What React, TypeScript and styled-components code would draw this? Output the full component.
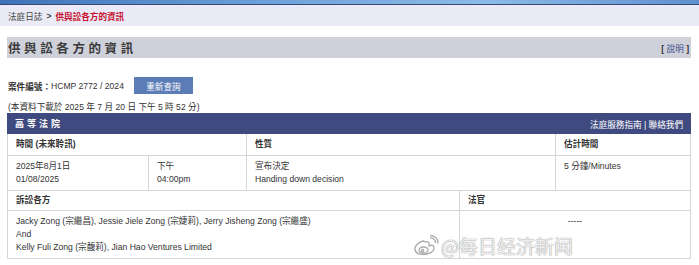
import styled, { createGlobalStyle } from 'styled-components';

const GlobalStyle = createGlobalStyle`
  html, body {
    margin: 0;
    padding: 0;
    background: #fff;
  }
  body {
    font-family: "Liberation Sans", "Noto Sans CJK TC", sans-serif;
    font-size: 8.6px;
    color: #333;
  }
`;

const Page = styled.div`
  position: relative;
  width: 699px;
  height: 265px;
  overflow: hidden;
`;

const TopBar = styled.div`
  height: 4px;
  background: linear-gradient(90deg, #3f73b8 0%, #6fa3da 40%, #8cbbe6 70%, #5e90cf 100%);
  border-bottom: 1px solid #3a4678;
`;

const Breadcrumb = styled.div`
  height: 21px;
  display: flex;
  align-items: center;
  padding-left: 8px;
  background: #eaebf6;
  font-size: 8.6px;
  color: #444;
`;

const Arrow = styled.span`
  font-weight: bold;
  margin: 0 4px;
`;

const Current = styled.span`
  color: #c8102e;
  font-weight: bold;
`;

const Content = styled.div`
  padding: 11px 8px 0 7px;
`;

const TitleBar = styled.div`
  height: 21px;
  display: flex;
  align-items: center;
  justify-content: space-between;
  padding: 0 2px 0 1px;
  background: #cfd1da;
`;

const Title = styled.h1`
  margin: 0;
  font-size: 12.5px;
  font-weight: bold;
  letter-spacing: 3.6px;
  color: #3a3a3a;
`;

const Help = styled.span`
  font-size: 8.6px;
  color: #3c4d8c;
  b {
    color: #333;
  }
`;

const CaseRow = styled.div`
  margin-top: 19px;
  height: 17px;
  display: flex;
  align-items: center;
  padding-left: 1px;
`;

const Label = styled.b`
  font-weight: bold;
`;

const RefreshButton = styled.button`
  margin-left: 10px;
  width: 59px;
  height: 17px;
  border: none;
  padding: 0;
  background: #5b7cb6;
  color: #fff;
  font-family: inherit;
  font-size: 8.6px;
`;

const Downloaded = styled.div`
  margin-top: 7px;
  height: 12px;
  line-height: 12px;
  padding-left: 1px;
`;

const Table = styled.div`
  border-left: 1px solid #d6d6d6;
  border-right: 1px solid #d6d6d6;
`;

const CourtBar = styled.div`
  height: 21px;
  display: flex;
  align-items: center;
  justify-content: space-between;
  padding: 0 8px 0 8px;
  margin-left: -1px;
  margin-right: -1px;
  background: #3f4b80;
  color: #fff;
`;

const CourtName = styled.span`
  font-weight: bold;
  font-size: 9px;
  letter-spacing: 3px;
`;

const Row = styled.div<{ cols: string }>`
  display: grid;
  grid-template-columns: ${p => p.cols};
  border-bottom: 1px solid #d6d6d6;
`;

const Cell = styled.div<{ head?: boolean; span?: number; pad?: string; center?: boolean }>`
  padding: ${p => p.pad || '4px 8px'};
  line-height: 13px;
  font-weight: ${p => (p.head ? 'bold' : 'normal')};
  grid-column: span ${p => p.span || 1};
  text-align: ${p => (p.center ? 'center' : 'left')};
  & + & {
    border-left: 1px solid #d6d6d6;
  }
`;

const Watermark = styled.div`
  position: absolute;
  left: 413px;
  top: 235px;
  display: flex;
  align-items: center;
  gap: 2px;
  font-size: 19px;
  color: rgba(255, 255, 255, 0.85);
  text-shadow: 0 0 1px #9a9a9a, 0 0 1px #9a9a9a;
  font-family: "Noto Sans CJK SC", sans-serif;
  line-height: 22px;
`;

const WeiboLogo = () => (
  <svg width="26" height="22" viewBox="0 0 26 22">
    <g fill="none" stroke="#aaaaaa" strokeWidth="1.3">
      <path d="M10 6 C5 7 1 12 2 15 C3 19 9 20 14 19 C19 18 22 15 21 12 C20 10 18 10 16 11 C17 8 15 6 13 7 C12 7 11 6 10 6 Z" />
      <ellipse cx="10.5" cy="15" rx="4.5" ry="3" />
      <circle cx="9.5" cy="15.5" r="1.2" />
      <path d="M17 3 C20 2.5 23 5 22.5 8" />
      <path d="M17 0.8 C21.5 0 25.5 4 24.8 8.5" />
    </g>
  </svg>
);

export default function App() {
  const topCols = '140px 98px 309px 1fr';
  const bottomCols = '451px 1fr';
  return (
    <>
      <GlobalStyle />
      <Page>
        <TopBar />
        <Breadcrumb>
          法庭日誌<Arrow>&gt;</Arrow><Current>供與訟各方的資訊</Current>
        </Breadcrumb>
        <Content>
          <TitleBar>
            <Title>供與訟各方的資訊</Title>
            <Help><b>[</b> 說明 <b>]</b></Help>
          </TitleBar>
          <CaseRow>
            <Label>案件編號：</Label>HCMP 2772 / 2024
            <RefreshButton>重新查詢</RefreshButton>
          </CaseRow>
          <Downloaded>(本資料下載於 2025 年 7 月 20 日 下午 5 時 52 分)</Downloaded>
          <Table>
            <CourtBar>
              <CourtName>高等法院</CourtName>
              <span>法庭服務指南 | 聯絡我們</span>
            </CourtBar>
            <Row cols={topCols}>
              <Cell head span={2}>時間 (未來聆訊)</Cell>
              <Cell head>性質</Cell>
              <Cell head>估計時間</Cell>
            </Row>
            <Row cols={topCols}>
              <Cell>2025年8月1日<br />01/08/2025</Cell>
              <Cell>下午<br />04:00pm</Cell>
              <Cell>宣布決定<br />Handing down decision</Cell>
              <Cell>5 分鐘/Minutes</Cell>
            </Row>
            <Row cols={bottomCols}>
              <Cell head pad="3px 8px">訴訟各方</Cell>
              <Cell head pad="3px 8px">法官</Cell>
            </Row>
            <Row cols={bottomCols}>
              <Cell>
                Jacky Zong (宗繼昌), Jessie Jiele Zong (宗婕莉), Jerry Jisheng Zong (宗繼盛)
                <br />And<br />
                Kelly Fuli Zong (宗馥莉), Jian Hao Ventures Limited
              </Cell>
              <Cell center>-----</Cell>
            </Row>
          </Table>
        </Content>
        <Watermark>
          <WeiboLogo />
          <span>@每日经济新闻</span>
        </Watermark>
      </Page>
    </>
  );
}
